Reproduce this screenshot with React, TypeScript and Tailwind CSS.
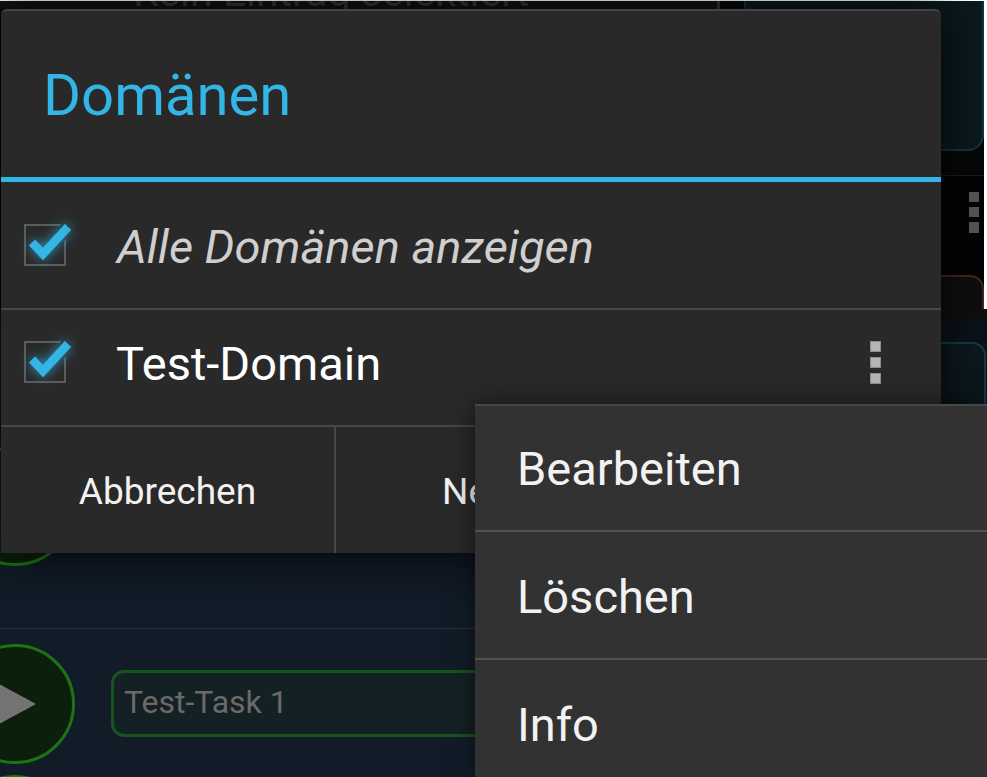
const FONT = "font-['Roboto',sans-serif]";

function Check() {
  return (
    <div className="relative w-[42px] h-[42px] border-2 border-[#5c5c5c] shrink-0">
      <svg className="absolute left-[-4px] top-[-4px] overflow-visible" width="56" height="50" viewBox="0 0 56 50">
        <path d="M10 20.5 L21 32 L46 5" fill="none" stroke="#2a2a2a" strokeWidth="14" />
        <path d="M10 20.5 L21 32 L46 5" fill="none" stroke="#33b5e5" strokeWidth="8.5" strokeLinejoin="miter"
          className="drop-shadow-[0_0_6px_rgba(51,181,229,0.8)]" />
      </svg>
    </div>
  );
}

function MoreDots() {
  return (
    <div className="flex flex-col gap-[5px]">
      {[0, 1, 2].map(i => (
        <div key={i} className="w-[11px] h-[11px] bg-[#b4b4b4] border border-[#8c8c8c]" />
      ))}
    </div>
  );
}

function Background() {
  return (
    <div className="flex flex-col">
      {/* top rows stop short of the right edge, page shows white there */}
      <div className="w-[984px] pt-px">
        <div className="flex h-[175px] bg-[#060709] border-b border-[#1c1c1c]">
          <div className="w-[717px] h-[9px] bg-[#0f1113] overflow-hidden">
            <div className="pl-[133px] -mt-[33px] text-[41px] leading-[48px] whitespace-nowrap text-[#333538]">Kein Eintrag selektiert</div>
          </div>
          <div className="w-[3px] h-[9px] bg-[#333]" />
          <div className="ml-[24px] flex-1 h-[150px] bg-[#0b181c] border-l-2 border-r-2 border-b-2 border-[#12323c] rounded-br-[16px]" />
        </div>
        <div className="h-[133px] bg-[#020406] flex flex-col items-end">
          <div className="mt-[16px] mr-[5px] flex flex-col gap-[5px]">
            <div className="w-[10px] h-[10px] bg-[#555]" />
            <div className="w-[10px] h-[10px] bg-[#555]" />
            <div className="w-[10px] h-[11px] bg-[#555]" />
          </div>
          <div className="mt-[42px] w-[280px] flex-1 bg-[#0e0e0f] border-t-2 border-r-2 border-[#4a2418] rounded-tr-[14px]" />
        </div>
      </div>
      <div className="h-[10px] bg-[#0e0e0f]" />
      <div className="h-[309px] flex bg-gradient-to-b from-[#0a1118] to-[#121c28] overflow-hidden">
        <div className="-ml-[45px] mt-[127px] w-[120px] h-[120px] shrink-0 rounded-full bg-[#0b1f0b] border-[3px] border-[#1c7414]" />
        <div className="ml-auto mr-px mt-[23px] w-[240px] h-[200px] bg-[#0c181e] border-2 border-[#143a48] rounded-[14px]" />
      </div>
      <div className="h-[149px] flex bg-[#121c28] border-t border-[#2e3236] overflow-hidden">
        <div className="-ml-[45px] pt-[15px] flex flex-col gap-[11px] shrink-0">
          <div className="relative w-[120px] h-[120px] shrink-0 rounded-full bg-[#0b1f0b] border-[3px] border-[#1c7414] overflow-hidden">
            <svg className="absolute left-[-3px] top-[-3px]" width="120" height="120" viewBox="0 0 120 120">
              <path d="M0 16 L81 60 L0 104 Z" fill="#747474" />
            </svg>
          </div>
          <div className="w-[120px] h-[120px] shrink-0 rounded-full bg-[#0b1f0b] border-[3px] border-[#1c7414]" />
        </div>
        <div className="ml-[36px] mt-[41px] w-[600px] h-[67px] bg-[#142124] border-[3px] border-[#185420] rounded-[13px] pl-[10px] pb-[4px] flex items-center text-[32px] text-[#6a6a6a]">
          Test-Task 1
        </div>
      </div>
    </div>
  );
}

export default function App() {
  return (
    <div className={`relative w-[987px] h-[777px] bg-white overflow-hidden ${FONT}`}>
      <Background />

      {/* Domains dialog */}
      <div className="absolute left-px top-[9px] w-[940px] h-[544px] flex flex-col bg-[#292929] border-t-2 border-[#444] rounded-t-[6px] shadow-[0_0_40px_rgba(0,0,0,0.75)]">
        <div className="h-[166px] flex items-center pl-[42px] pt-[3px] text-[58px] text-[#33b5e5]">Domänen</div>
        <div className="h-[5px] bg-[#33b5e5]" />
        <div className="h-[126px] flex items-center pl-[23px]">
          <Check />
          <span className="ml-[51px] pt-[4px] text-[47px] italic text-[#cfcfcf]">Alle Domänen anzeigen</span>
        </div>
        <div className="h-[2px] bg-[#474747]" />
        <div className="h-[115px] flex items-center pl-[23px] pr-[60px] pb-[11px]">
          <Check />
          <span className="ml-[50px] pt-[4px] text-[47px] text-white flex-1">Test-Domain</span>
          <MoreDots />
        </div>
        <div className="h-[2px] bg-[#474747]" />
        <div className="flex-1 flex text-[37px] text-[#f2f2f2]">
          <div className="w-[333px] pt-[4px] flex items-center justify-center">Abbrechen</div>
          <div className="w-[2px] bg-[#474747]" />
          <div className="flex-1 pt-[4px] flex items-center pl-[106px]">Neu</div>
        </div>
      </div>

      {/* Overflow menu */}
      <div className="absolute left-[475px] right-0 top-[404px] bottom-0 flex flex-col bg-[#323232] border-t-2 border-[#464646] shadow-[0_0_24px_rgba(0,0,0,0.55)] text-[47px] text-[#f2f2f2]">
        <div className="h-[124px] shrink-0 flex items-center pl-[42px] pt-[2px]">Bearbeiten</div>
        <div className="h-[2px] shrink-0 bg-[#505050]" />
        <div className="h-[126px] shrink-0 flex items-center pl-[42px] pt-[4px]">Löschen</div>
        <div className="h-[2px] shrink-0 bg-[#505050]" />
        <div className="h-[130px] shrink-0 flex items-center pl-[42px]">Info</div>
      </div>
    </div>
  );
}
